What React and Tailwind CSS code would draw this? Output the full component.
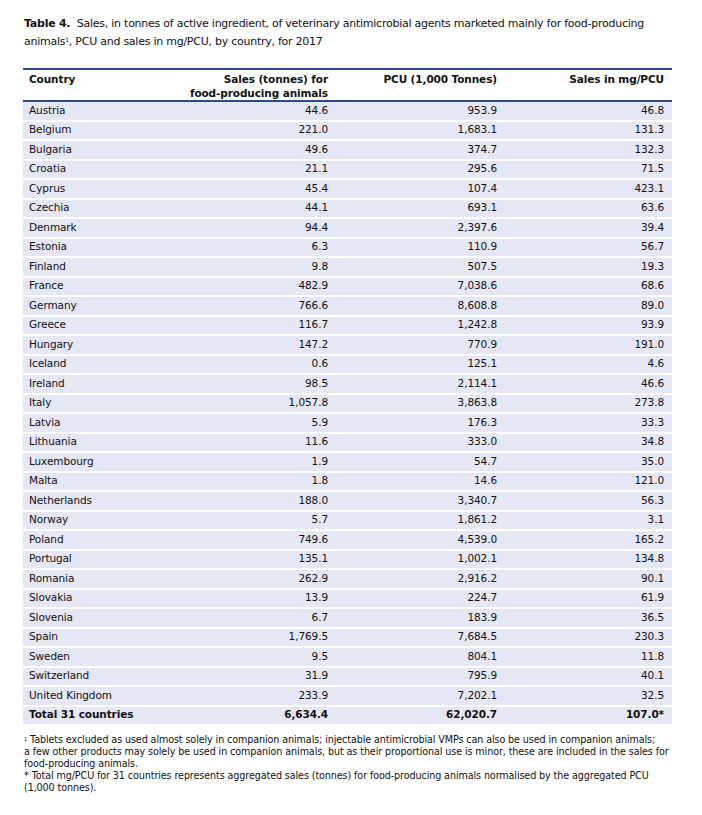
import React from 'react';

const rows = [
    ['Austria', '44.6', '953.9', '46.8'],
    ['Belgium', '221.0', '1,683.1', '131.3'],
    ['Bulgaria', '49.6', '374.7', '132.3'],
    ['Croatia', '21.1', '295.6', '71.5'],
    ['Cyprus', '45.4', '107.4', '423.1'],
    ['Czechia', '44.1', '693.1', '63.6'],
    ['Denmark', '94.4', '2,397.6', '39.4'],
    ['Estonia', '6.3', '110.9', '56.7'],
    ['Finland', '9.8', '507.5', '19.3'],
    ['France', '482.9', '7,038.6', '68.6'],
    ['Germany', '766.6', '8,608.8', '89.0'],
    ['Greece', '116.7', '1,242.8', '93.9'],
    ['Hungary', '147.2', '770.9', '191.0'],
    ['Iceland', '0.6', '125.1', '4.6'],
    ['Ireland', '98.5', '2,114.1', '46.6'],
    ['Italy', '1,057.8', '3,863.8', '273.8'],
    ['Latvia', '5.9', '176.3', '33.3'],
    ['Lithuania', '11.6', '333.0', '34.8'],
    ['Luxembourg', '1.9', '54.7', '35.0'],
    ['Malta', '1.8', '14.6', '121.0'],
    ['Netherlands', '188.0', '3,340.7', '56.3'],
    ['Norway', '5.7', '1,861.2', '3.1'],
    ['Poland', '749.6', '4,539.0', '165.2'],
    ['Portugal', '135.1', '1,002.1', '134.8'],
    ['Romania', '262.9', '2,916.2', '90.1'],
    ['Slovakia', '13.9', '224.7', '61.9'],
    ['Slovenia', '6.7', '183.9', '36.5'],
    ['Spain', '1,769.5', '7,684.5', '230.3'],
    ['Sweden', '9.5', '804.1', '11.8'],
    ['Switzerland', '31.9', '795.9', '40.1'],
    ['United Kingdom', '233.9', '7,202.1', '32.5'],
];

// column template shared by header and rows
const cols = 'grid grid-cols-[160px_145px_169px_171px]';

const Row = ({ r, bold }) => (
    <div className={`${cols} h-[19.5px] bg-[#e6e7f4] border-b-2 border-white items-center ${bold ? 'font-bold' : ''}`}>
        <div className="pl-[6px]">{r[0]}</div>
        <div className="text-right">{r[1]}</div>
        <div className="text-right">{r[2]}</div>
        <div className="text-right pr-[4px]">{r[3]}</div>
    </div>
);

export default function App() {
    return (
        <div className="w-[702px] h-[815px] bg-white text-[#111] font-['DejaVu_Sans',sans-serif]">
            <div className="pl-[24px] pt-[15px] text-[11px] leading-[18px] tracking-[-0.25px]">
                <span className="font-bold">Table 4.</span>&nbsp; Sales, in tonnes of active ingredient, of veterinary antimicrobial agents marketed mainly for food-producing
                <br />
                animals<sup className="text-[6px]">1</sup>, PCU and sales in mg/PCU, by country, for 2017
            </div>

            <div className="ml-[23px] mt-[17px] w-[649px] text-[10.5px] tracking-[-0.1px]">
                <div className={`${cols} h-[34px] border-t-2 border-b-2 border-[#2c4a8c] font-bold pt-[2px] leading-[14px]`}>
                    <div className="pl-[6px]">Country</div>
                    <div className="text-right">Sales (tonnes) for<br />food-producing animals</div>
                    <div className="text-right">PCU (1,000 Tonnes)</div>
                    <div className="text-right pr-[4px]">Sales in mg/PCU</div>
                </div>
                {rows.map((r) => (
                    <Row key={r[0]} r={r} />
                ))}
                <Row r={['Total 31 countries', '6,634.4', '62,020.7', '107.0*']} bold />
            </div>

            <div className="pl-[24px] pt-[8px] text-[9.6px] leading-[12px] tracking-[-0.1px]">
                <div><sup className="text-[5px]">1</sup> Tablets excluded as used almost solely in companion animals; injectable antimicrobial VMPs can also be used in companion animals;</div>
                <div>a few other products may solely be used in companion animals, but as their proportional use is minor, these are included in the sales for</div>
                <div>food-producing animals.</div>
                <div>* Total mg/PCU for 31 countries represents aggregated sales (tonnes) for food-producing animals normalised by the aggregated PCU</div>
                <div>(1,000 tonnes).</div>
            </div>
        </div>
    );
}
